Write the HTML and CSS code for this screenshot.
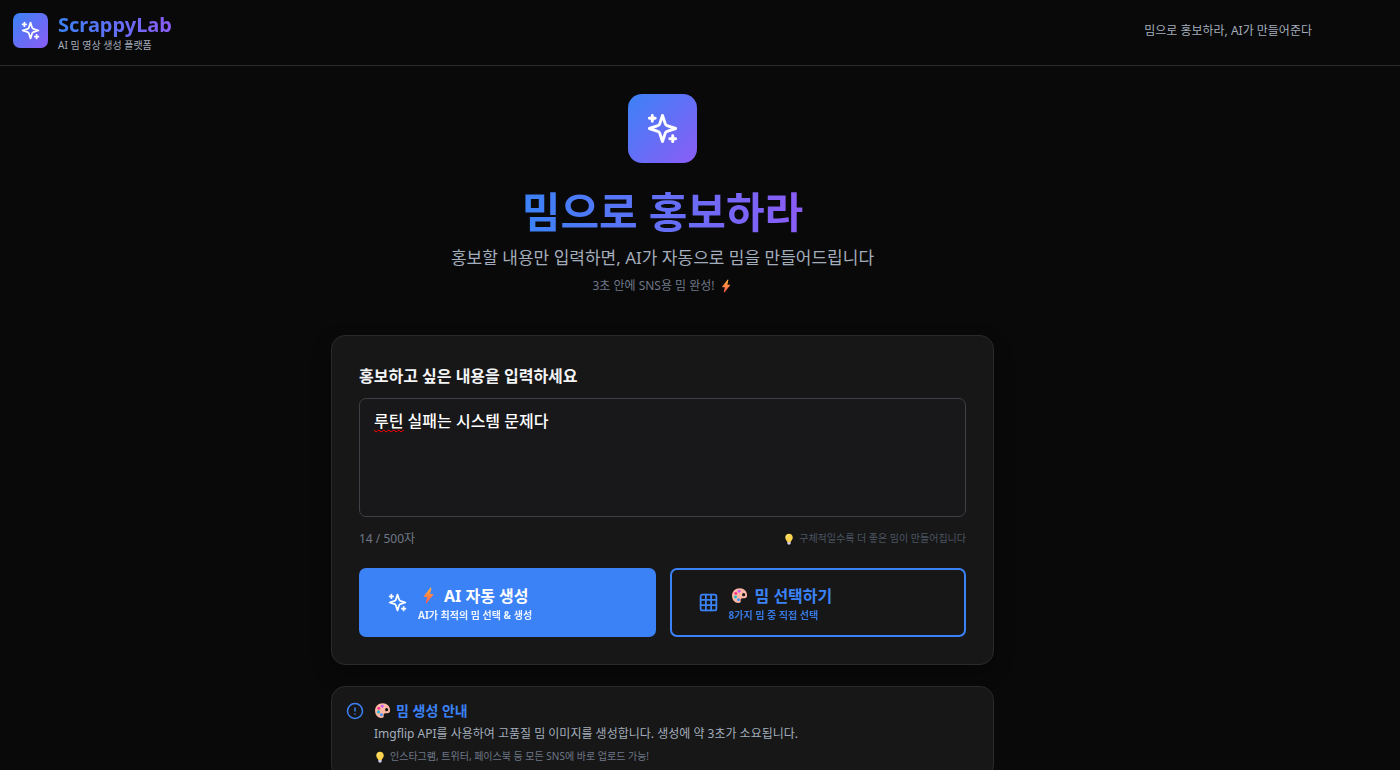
FILE: index.html
```html
<!DOCTYPE html>
<html lang="ko">
<head>
<meta charset="utf-8">
<meta name="viewport" content="width=device-width, initial-scale=1">
<title>ScrappyLab</title>
<link rel="stylesheet" href="styles.css">
</head>
<body>
<svg class="defs" width="0" height="0" aria-hidden="true">
  <defs>
    <linearGradient id="bolt-fill" x1="0" y1="0" x2="0" y2="1">
      <stop offset="0" stop-color="#ffb13b"/>
      <stop offset="1" stop-color="#ff5a4f"/>
    </linearGradient>
    <symbol id="sparkles" viewBox="0 0 24 24">
      <g fill="none" stroke="currentColor" stroke-width="2" stroke-linecap="round" stroke-linejoin="round">
        <path d="m12 3-1.912 5.813a2 2 0 0 1-1.275 1.275L3 12l5.813 1.912a2 2 0 0 1 1.275 1.275L12 21l1.912-5.813a2 2 0 0 1 1.275-1.275L21 12l-5.813-1.912a2 2 0 0 1-1.275-1.275L12 3Z"/>
        <path d="M5 3v4M3 5h4M19 17v4M17 19h4"/>
      </g>
    </symbol>
    <symbol id="grid" viewBox="0 0 24 24">
      <g fill="none" stroke="currentColor" stroke-width="2" stroke-linecap="round" stroke-linejoin="round">
        <rect x="3" y="3" width="18" height="18" rx="2"/>
        <path d="M3 9h18M3 15h18M9 3v18M15 3v18"/>
      </g>
    </symbol>
    <symbol id="alert" viewBox="0 0 24 24">
      <g fill="none" stroke="currentColor" stroke-width="2" stroke-linecap="round">
        <circle cx="12" cy="12" r="10"/>
        <path d="M12 8v4M12 16h.01"/>
      </g>
    </symbol>
    <symbol id="bolt" viewBox="0 0 32 32">
      <path fill="url(#bolt-fill)" d="M19.500 1.500 7.500 17c-.6.900-.2 1.800.9 1.800h5L11 29.300c-.3 1.300.900 1.700 1.700.700L25 14.800c.7-.9.200-1.800-.8-1.800h-5l2.200-10.600c.2-1.300-1.100-1.800-1.900-.900Z"/>
    </symbol>
    <symbol id="palette" viewBox="0 0 32 32">
      <path fill="#ffb8a4" d="M16.500 2.500C8 2.500 2 8.200 2 16.500 2 24.600 7.300 30 13.800 30c3.400 0 4.900-1.700 4.400-4.300-.5-2.700.7-4.500 3.400-4.500h3.600c3.300 0 5-2 5-5.200 0-7.900-5.700-13.500-13.700-13.500Z"/>
      <circle cx="23.800" cy="14.500" r="3" fill="#171717"/>
      <circle cx="15.500" cy="8" r="2.800" fill="#c45cf5"/>
      <circle cx="9" cy="12" r="2.800" fill="#f92f8c"/>
      <circle cx="8.500" cy="19" r="2.800" fill="#17b8cf"/>
      <circle cx="14" cy="24" r="2.800" fill="#4c94ff"/>
    </symbol>
    <symbol id="bulb" viewBox="0 0 32 32">
      <path fill="#fcd34d" d="M16 2C10 2 6 6.300 6 11.800c0 4 2.400 6.300 4.200 9.200.7 1.200 1 2 1.200 3h9.200c.2-1 .5-1.800 1.200-3 1.800-2.900 4.200-5.200 4.200-9.200C26 6.300 22 2 16 2Z"/>
      <path fill="#fff0a3" d="M13 5c-3 1-5 4-4.500 7 .3 2 1.500 2 2 .300C11.200 9.500 12 8 14 6.800 15.500 5.800 15 4.500 13 5Z"/>
      <path fill="#d5cbe4" d="M11.500 24h9v3.500c0 2-2 3.500-4.500 3.500s-4.500-1.500-4.500-3.500Z"/>
    </symbol>
  </defs>
</svg>

<header class="header">
  <div class="header-inner">
    <div class="brand">
      <span class="brand-mark"><svg class="icon icon-md"><use href="#sparkles"/></svg></span>
      <div class="brand-text">
        <span class="brand-name gradient-text">ScrappyLab</span>
        <span class="brand-tagline">AI 밈 영상 생성 플랫폼</span>
      </div>
    </div>
    <p class="slogan">밈으로 홍보하라, AI가 만들어준다</p>
  </div>
</header>

<main class="main">
  <section class="hero">
    <span class="hero-mark"><svg class="icon icon-lg"><use href="#sparkles"/></svg></span>
    <h1 class="hero-title gradient-text">밈으로 홍보하라</h1>
    <p class="hero-lead">홍보할 내용만 입력하면, AI가 자동으로 밈을 만들어드립니다</p>
    <p class="hero-note">3초 안에 SNS용 밈 완성! <svg class="emoji emoji-md"><use href="#bolt"/></svg></p>
  </section>

  <form class="card composer">
    <label class="field-label" for="content">홍보하고 싶은 내용을 입력하세요</label>
    <div class="field">
      <textarea class="field-input" id="content" maxlength="500" spellcheck="false">루틴 실패는 시스템 문제다</textarea>
      <svg class="squiggle" viewBox="0 0 30 4" aria-hidden="true"><path d="M0 1l2 2 3-2 2 2 3-2 2 2 3-2 2 2 3-2 2 2 3-2 2 2 3-2"/></svg>
    </div>
    <div class="field-meta">
      <span class="counter">14 / 500자</span>
      <span class="hint"><svg class="emoji emoji-sm"><use href="#bulb"/></svg>구체적일수록 더 좋은 밈이 만들어집니다</span>
    </div>
    <div class="actions">
      <button class="action action-primary" type="button">
        <svg class="icon icon-md"><use href="#sparkles"/></svg>
        <span class="action-text">
          <span class="action-title"><svg class="emoji emoji-lg"><use href="#bolt"/></svg>AI 자동 생성</span>
          <span class="action-sub">AI가 최적의 밈 선택 &amp; 생성</span>
        </span>
      </button>
      <button class="action action-outline" type="button">
        <svg class="icon icon-md"><use href="#grid"/></svg>
        <span class="action-text">
          <span class="action-title"><svg class="emoji emoji-lg"><use href="#palette"/></svg>밈 선택하기</span>
          <span class="action-sub">8가지 밈 중 직접 선택</span>
        </span>
      </button>
    </div>
  </form>

  <section class="card info">
    <svg class="icon info-icon"><use href="#alert"/></svg>
    <div class="info-body">
      <h2 class="info-title"><svg class="emoji emoji-lg"><use href="#palette"/></svg>밈 생성 안내</h2>
      <p class="info-text">Imgflip API를 사용하여 고품질 밈 이미지를 생성합니다. 생성에 약 3초가 소요됩니다.</p>
      <p class="info-note"><svg class="emoji emoji-sm"><use href="#bulb"/></svg>인스타그램, 트위터, 페이스북 등 모든 SNS에 바로 업로드 가능!</p>
    </div>
  </section>
</main>
</body>
</html>
```

FILE: styles.css
```css
* { box-sizing: border-box; }

body {
  margin: 0;
  background: #090909;
  color: #f3f4f6;
  font-family: "Noto Sans", "Noto Sans CJK KR", sans-serif;
  font-size: 12px;
  overflow-x: hidden;
}

h1, h2, p { margin: 0; }

.defs { position: absolute; }

.icon, .emoji { display: block; flex: none; }
.icon-md { width: 21px; height: 21px; }
.icon-lg { width: 35px; height: 35px; }
.emoji-sm { width: 12px; height: 12px; }
.emoji-md { width: 14px; height: 14px; }
.emoji-lg { width: 17px; height: 17px; }

.gradient-text {
  background: linear-gradient(90deg, #3b82f6, #8b5cf6);
  background-clip: text;
  -webkit-background-clip: text;
  color: transparent;
}

.header {
  border-bottom: 1px solid #2a2a2a;
  padding-right: 75px;
}

.header-inner {
  display: flex;
  align-items: flex-start;
  justify-content: space-between;
  padding: 13px 13px 12px;
}

.brand { display: flex; gap: 10px; }

.brand-mark, .hero-mark {
  display: grid;
  place-items: center;
  color: #fff;
  background: linear-gradient(135deg, #3b82f6, #8b5cf6);
}

.brand-mark { width: 35px; height: 35px; border-radius: 7px; }
.brand-text { display: flex; flex-direction: column; }
.brand-name { font-size: 20px; font-weight: 700; line-height: 24px; }
.brand-tagline { font-size: 10px; line-height: 16px; color: #a3adbb; }
.slogan { line-height: 35px; color: #a3adbb; }

.main {
  display: flex;
  flex-direction: column;
  align-items: center;
  padding: 28px 75px 28px 0;
}

.hero {
  display: flex;
  flex-direction: column;
  align-items: center;
  text-align: center;
  margin-bottom: 41px;
}

.hero-mark { width: 69px; height: 69px; border-radius: 14px; }
.hero-title { margin-top: 23px; font-size: 42px; font-weight: 700; line-height: 52px; }
.hero-lead { margin-top: 8px; font-size: 17px; line-height: 24px; color: #a3adbb; }
.hero-note { display: flex; align-items: center; gap: 4px; margin-top: 7px; line-height: 17px; color: #6f7888; }

.card {
  width: 100%;
  max-width: 663px;
  border: 1px solid #2a2a2a;
  border-radius: 14px;
  background: #171717;
}

.composer { padding: 27px; box-shadow: 0 8px 20px rgba(0, 0, 0, .3); }
.field-label { display: block; margin-bottom: 9px; font-size: 16px; font-weight: 700; line-height: 26px; }
.field { position: relative; display: flex; }

.field-input {
  width: 100%;
  height: 119px;
  padding: 9px 14px;
  border: 1px solid #3f3f46;
  border-radius: 7px;
  outline: none;
  resize: none;
  background: #18181b;
  color: #fff;
  font: 500 16px/26px "Noto Sans", "Noto Sans CJK KR", sans-serif;
}

.squiggle { position: absolute; left: 15px; top: 31px; width: 30px; height: 4px; fill: none; stroke: #f00000; }

.field-meta { display: flex; align-items: center; justify-content: space-between; margin: 13px 0 21px; line-height: 17px; }
.counter { color: #6f7888; }
.hint { display: flex; align-items: center; gap: 4px; font-size: 10px; color: #4b5563; }

.actions { display: grid; grid-template-columns: 1fr 1fr; gap: 14px; }

.action {
  display: flex;
  align-items: center;
  gap: 10px;
  min-height: 69px;
  padding: 0 26px;
  border: 2px solid #3b82f6;
  border-radius: 7px;
  font-family: inherit;
  font-weight: 700;
  text-align: left;
  cursor: pointer;
}

.action-primary { background: #3b82f6; color: #fff; }
.action-outline { background: transparent; color: #3b82f6; }
.action-text { display: flex; flex-direction: column; }
.action-title { display: flex; align-items: center; gap: 7px; padding-left: 2px; font-size: 16px; line-height: 24px; }
.action-sub { font-size: 10px; line-height: 14px; opacity: .9; }

.info { display: flex; gap: 10px; margin-top: 21px; padding: 13px 14px; }
.info-icon { width: 18px; height: 18px; margin-top: 2px; color: #3b82f6; }
.info-title { display: flex; align-items: center; gap: 5px; font-size: 14px; line-height: 21px; color: #3b82f6; }
.info-text { margin-top: 2px; line-height: 21px; color: #a3adbb; }
.info-note { display: flex; align-items: center; gap: 4px; margin-top: 4px; font-size: 10px; line-height: 17px; color: #6f7888; }
```
